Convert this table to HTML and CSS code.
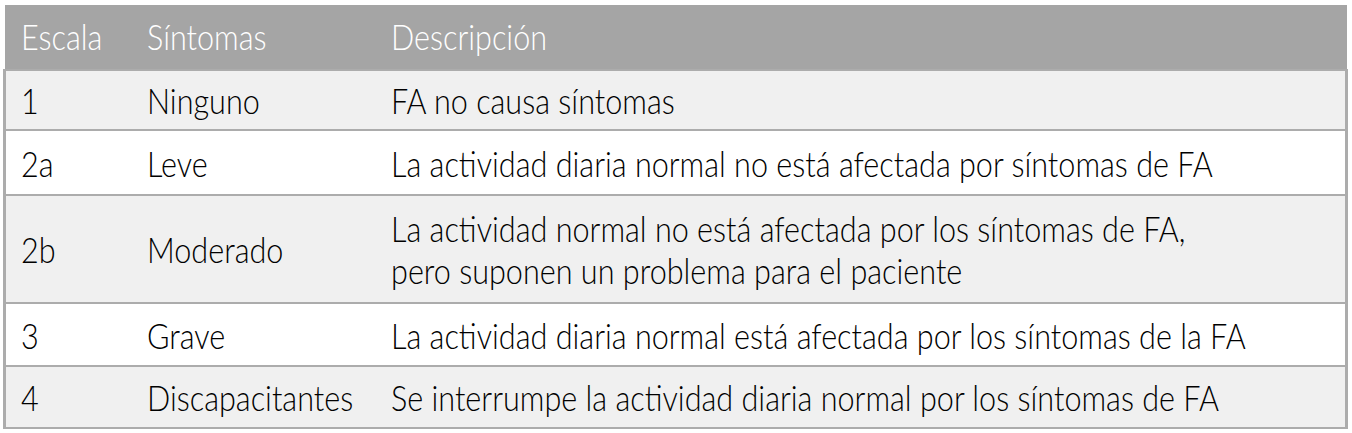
FILE: index.html
```html
<!DOCTYPE html>
<html lang="es">
<head>
<meta charset="utf-8">
<link rel="stylesheet" href="styles.css">
</head>
<body>
<table class="scale">
  <thead>
    <tr class="head"><th class="c1"><span class="tx">Escala</span></th><th class="c2"><span class="tx">Síntomas</span></th><th class="c3"><span class="tx">Descripción</span></th></tr>
  </thead>
  <tbody>
    <tr class="shade r1"><td><span class="tx">1</span></td><td><span class="tx">Ninguno</span></td><td><span class="tx">FA no causa síntomas</span></td></tr>
    <tr class="r2"><td><span class="tx">2a</span></td><td><span class="tx">Leve</span></td><td><span class="tx">La actividad diaria normal no está afectada por síntomas de FA</span></td></tr>
    <tr class="shade r3"><td><span class="tx">2b</span></td><td><span class="tx">Moderado</span></td><td><span class="tx">La actividad normal no está afectada por los síntomas de FA,<br>pero suponen un problema para el paciente</span></td></tr>
    <tr class="r4"><td><span class="tx">3</span></td><td><span class="tx">Grave</span></td><td><span class="tx">La actividad diaria normal está afectada por los síntomas de la FA</span></td></tr>
    <tr class="shade r5"><td><span class="tx">4</span></td><td><span class="tx">Discapacitantes</span></td><td><span class="tx">Se interrumpe la actividad diaria normal por los síntomas de FA</span></td></tr>
  </tbody>
</table>
</body>
</html>
```

FILE: styles.css
```css
html, body { margin: 0; padding: 0; background: #ffffff; overflow: hidden; }
body { padding: 5px 0 0 3px; }
.scale {
  border-collapse: collapse;
  width: 1345px;
  table-layout: fixed;
  font-family: Lato, "Liberation Sans", sans-serif;
  font-size: 36px;
  font-weight: 300;
  color: #000000;
}
.scale th, .scale td {
  text-align: left;
  vertical-align: middle;
  padding: 0 0 0 16px;
  line-height: 42px;
  white-space: nowrap;
  overflow: visible;
}
.tx {
  display: inline-block;
  transform: scaleX(0.85);
  transform-origin: 0 50%;
}
.head { background: #a5a5a5; }
.scale th {
  color: #ffffff;
  font-weight: 300;
  height: 61px;
  padding-bottom: 3px;
  border-bottom: 1px solid #a5a5a5;
}
.c1 { width: 110px; padding-left: 17px; }
.c2 { width: 228px; }
.scale td { border-top: 2px solid #acacac; border-bottom: 2px solid #acacac; }
.scale tr td:first-child { border-left: 3px solid #acacac; padding-left: 15px; }
.scale tr td:last-child { border-right: 3px solid #acacac; }
.shade { background: #f0f0f0; }
.r1 td { height: 58px; }
.r2 td { height: 63px; }
.r3 td { height: 106px; }
.r4 td { height: 61px; }
.r5 td { height: 60px; }
```
